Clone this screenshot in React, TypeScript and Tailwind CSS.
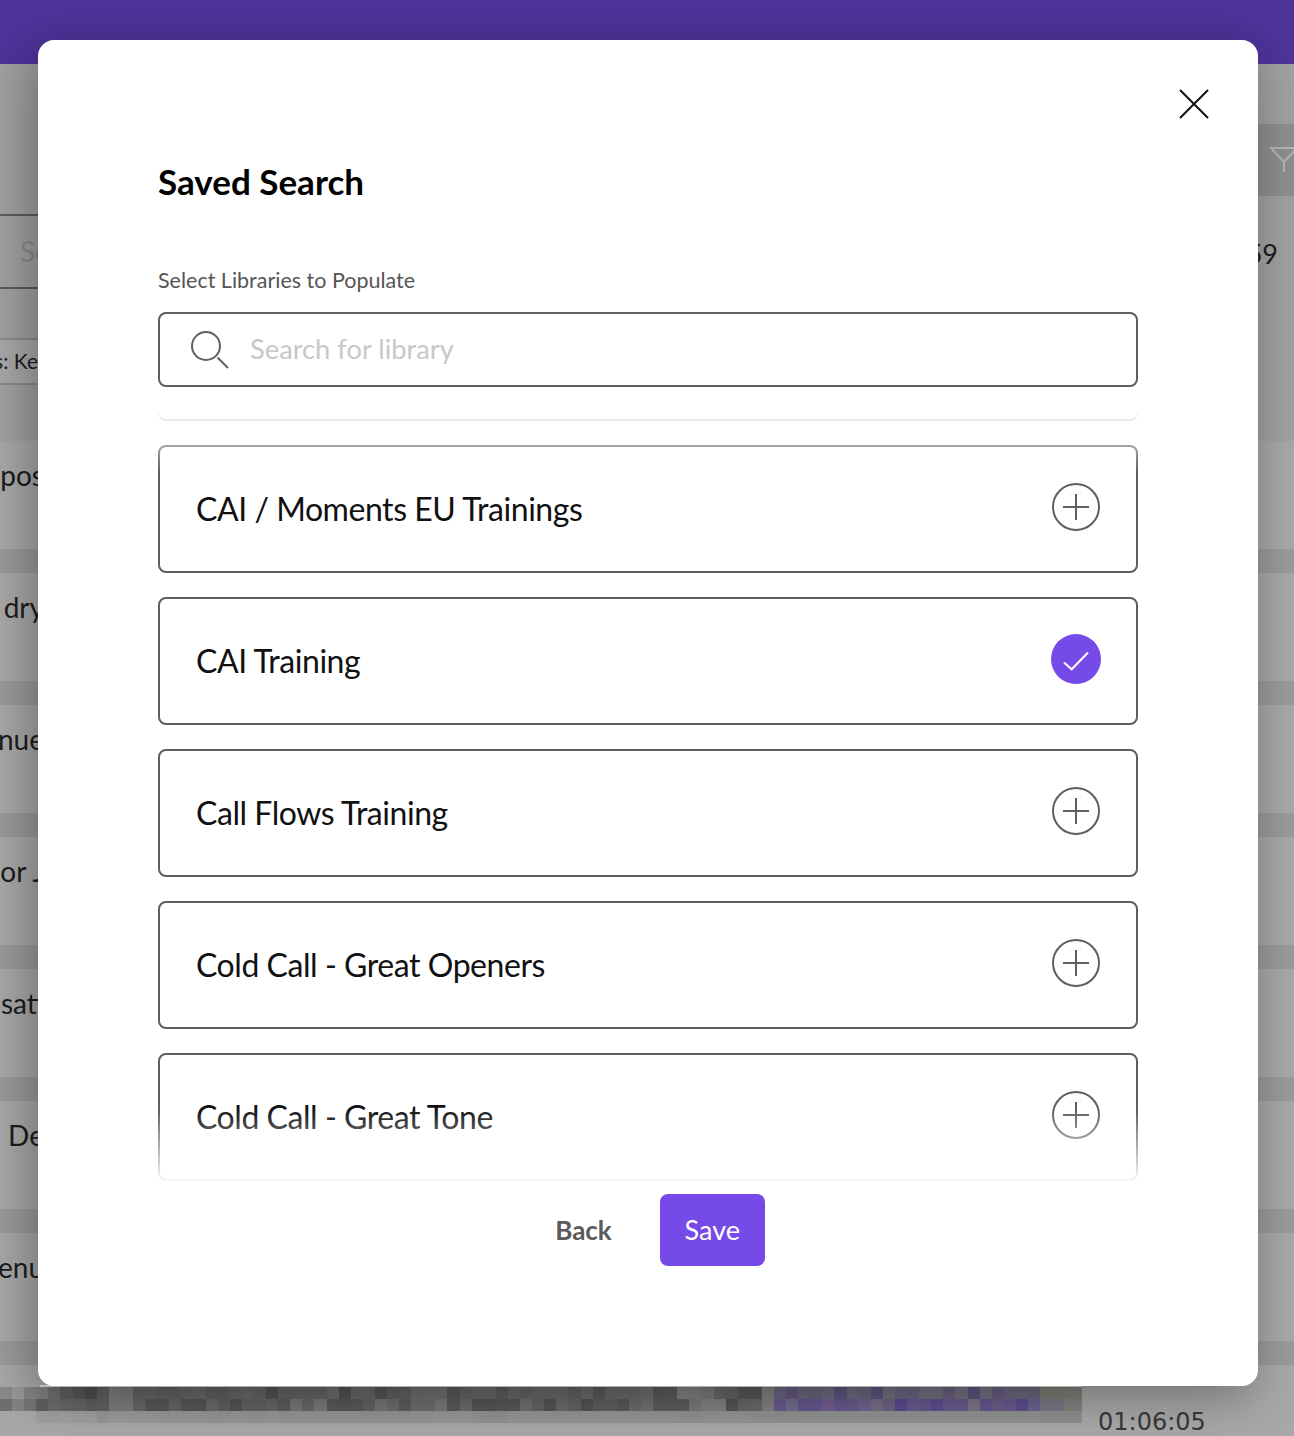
const bgRows = ["oppos", "t dry", "nue", "or J", "sati", "De", "enu"];

const libraries = [
  { name: "CAI / Moments EU Trainings", added: false },
  { name: "CAI Training", added: true },
  { name: "Call Flows Training", added: false },
  { name: "Cold Call - Great Openers", added: false },
  { name: "Cold Call - Great Tone", added: false },
];

// blurred transcript strip behind the dialog: 90 cells a row, two digits = a grey
const strip = [
  "8a 98 84 80 70 60 58 50 62 7e 7c 64 66 62 62 66 68 60 60 66 68 64 54 64 64 66 64 6e 52 68 68 56 60 62 6e 70 70 5a 64 68 68 5c 68 64 68 68 68 62 6c 5a 68 6a 6a 6e 5a 5c 82 80 7a 68 64 58 58 82 6b6580 655a80 6c6880 6a6480 6e6a80 5f5580 6e6a80 6a6680 5f5580 747080 6a6680 6a6680 747080 747080 6a6080 747080 5f5580 747080 685e80 6c6880 6c6880 6c6880 7e7e78 7e7e78 7e7e78 808078",
  "70 84 76 60 6c 68 66 60 62 7e 7e 68 58 58 66 58 56 6a 60 54 62 62 66 5c 78 68 7a 5a 58 5a 64 76 6e 5e 6e 6e 7a 5a 6c 56 56 58 58 70 64 56 6a 64 54 5e 60 5a 6c 72 5e 5e 5e 7a 82 82 56 68 6a 82 6a5c90 746c90 665890 665890 745f90 665890 6a5c90 706490 787088 6e6488 5a4a90 6a5c90 665890 5f4f90 6a5c90 6a5c90 7c7888 665890 6c6088 685a90 5f4f90 6e6490 7c7888 7c7888 848480 848480",
  "a8 a8 a8 a0 a0 a2 a0 a0 98 9c 9c 9a 9a 98 98 98 98 96 96 98 96 96 98 96 96 96 96 96 96 96 94 94 94 94 96 96 98 98 98 94 92 92 96 96 96 96 94 94 96 96 96 96 96 94 94 94 92 92 94 94 94 94 92 92 909290 909290 929492 929492 929492 929492 929492 929492 929492 929492 929492 929492 929492 929492 929492 929492 929492 929492 929492 929492 929492 929492 90 90 90 90",
];

function PlusIcon() {
  return (
    <svg className="mb-1" width="50" height="50" viewBox="0 0 50 50" fill="none" stroke="#5f5f5f" strokeWidth="2">
      <circle cx="25" cy="25" r="23" />
      <path d="M25 12v26M12 25h26" />
    </svg>
  );
}

function CheckIcon() {
  return (
    <svg className="mb-1" width="50" height="50" viewBox="0 0 50 50" fill="none">
      <circle cx="25" cy="25" r="25" fill="#764ae8" />
      <path d="M13 28.5l7.7 6.8L37 18.5" stroke="#fff" strokeWidth="2" />
    </svg>
  );
}

export default function App() {
  return (
    <div className="relative flex h-[1436px] w-[1294px] flex-col overflow-hidden bg-[#a8a8a8] font-['Lato',sans-serif]">
      <div className="h-16 shrink-0 bg-[#4f339b]" />

      {/* page behind the dialog */}
      <div className="flex h-[377px] shrink-0 justify-between bg-[#a1a1a1]">
        <div className="w-[38px] overflow-hidden pt-[150px]">
          <div className="h-[75px] border-y-2 border-[#5c5c5c] pl-5 text-[28px] leading-[71px] text-[#8a8a8a]">Se</div>
          <div className="mt-[49px] flex h-[47px] justify-end border-y-2 border-[#8a8a8a] bg-[#a8a8a8] text-[21px] leading-[41px] whitespace-nowrap text-[#1c1c1c]">
            <span className="shrink-0">s: Ke</span>
          </div>
        </div>
        <div className="w-9 overflow-hidden pt-[60px]">
          <div className="flex h-[72px] items-center bg-[#8e8e8e] pl-[11px]">
            <svg className="shrink-0" width="30" height="28" viewBox="0 0 30 28" fill="none" stroke="#b4b4b4" strokeWidth="2">
              <path d="M2 2h26L15 16zM15 16v10" />
            </svg>
          </div>
          <div className="mt-[42px] flex justify-end pr-4 text-[27px] leading-[32px] text-[#1c1c1c]">
            <span className="shrink-0">59</span>
          </div>
        </div>
      </div>

      {bgRows.map((text) => (
        <div key={text} className="h-[132px] shrink-0">
          <div className="flex h-[108px] w-[38px] justify-end overflow-hidden pt-4 text-[28px] leading-9 whitespace-nowrap text-[#1c1c1c]">
            <span className="-mr-[6px] h-9 shrink-0">{text}</span>
          </div>
          <div className="h-6 bg-[#9b9b9b]" />
        </div>
      ))}

      <div className="mt-5 flex shrink-0 items-start">
        <div className="w-[1082px] overflow-hidden">
          <div className="ml-10 h-[2px] bg-[#e0e0e0]" />
          {strip.map((row, i) => (
            <div key={i} className="flex h-3 w-[1088px]">
              {row.split(" ").map((c, j) => (
                <div key={j} className="h-3 flex-1" style={{ backgroundColor: `#${c.length === 2 ? c + c + c : c}` }} />
              ))}
            </div>
          ))}
        </div>
        <span className="mt-[22px] ml-4 font-['DejaVu_Sans',sans-serif] text-[24px] leading-[30px] text-[#383838]">01:06:05</span>
      </div>

      {/* dialog */}
      <div className="absolute top-10 left-[38px] h-[1346px] w-[1220px] rounded-2xl bg-white px-[120px] pt-[118px] shadow-[-6px_10px_50px_rgba(0,0,0,0.35)]">
        <button className="absolute top-[48px] right-[48px]">
          <svg className="block" width="32" height="32" viewBox="0 0 32 32" fill="none" stroke="#111" strokeWidth="2">
            <path d="M2 2l28 28M30 2L2 30" />
          </svg>
        </button>

        <h1 className="text-[35px] leading-[46px] font-bold text-black">Saved Search</h1>
        <p className="mt-16 text-[21.5px] leading-6 text-[#555]">Select Libraries to Populate</p>

        <div className="mt-5 flex h-[75px] items-center rounded-lg border-2 border-[#5f5f5f] pl-[31px]">
          <svg className="shrink-0" width="38" height="38" viewBox="0 0 38 38" fill="none" stroke="#5f5f5f" strokeWidth="2">
            <circle cx="15" cy="15" r="14" />
            <path d="M26.5 26.5L37 37" />
          </svg>
          <span className="ml-[21px] text-[27.3px] text-[#c8c8c8]">Search for library</span>
        </div>

        <div className="relative mt-px h-[793px] overflow-hidden">
          <div className="-mt-[95px] flex flex-col gap-6">
            <div className="h-32 shrink-0 rounded-lg border-2 border-[#5f5f5f]" />
            {libraries.map((lib) => (
              <div key={lib.name} className="flex h-32 shrink-0 items-center justify-between rounded-lg border-2 border-[#5f5f5f] pr-[35px] pl-9">
                <span className="text-[32px] tracking-[-0.45px] text-[#111]">{lib.name}</span>
                {lib.added ? <CheckIcon /> : <PlusIcon />}
              </div>
            ))}
          </div>
          <div className="absolute inset-x-0 top-0 h-[84px] bg-linear-to-b from-white from-[28%] to-transparent" />
          <div className="absolute inset-x-0 bottom-0 h-[72px] bg-linear-to-t from-white/95 to-transparent" />
        </div>

        <div className="mt-[13px] flex items-center justify-center pl-6">
          <button className="mr-12 text-[26px] font-bold text-[#5a5a5a]">Back</button>
          <button className="h-[72px] w-[105px] rounded-lg bg-[#764ae8] text-[27px] text-white">Save</button>
        </div>
      </div>
    </div>
  );
}
